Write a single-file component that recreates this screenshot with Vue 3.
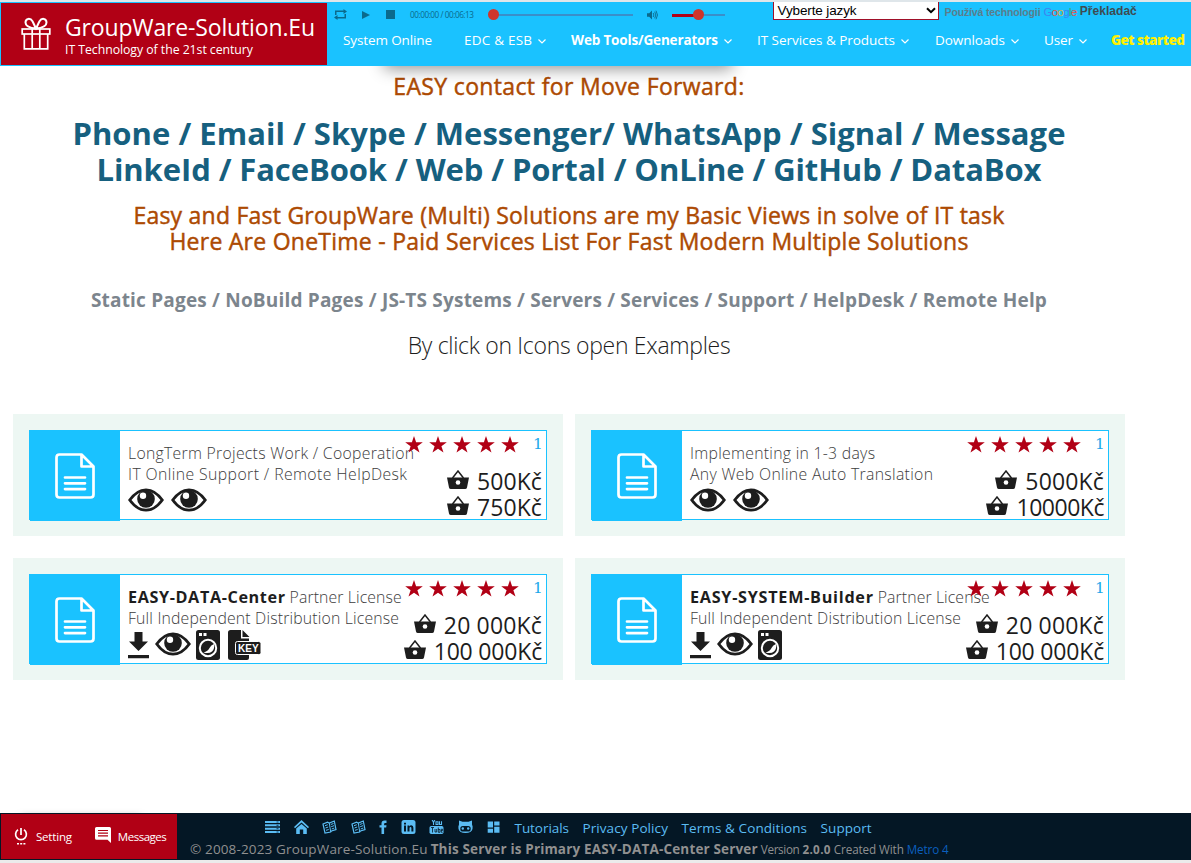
<script setup>
// Spreads or tightens the letters of a label so that it takes the given width.
const vFit = {
  mounted(el, { value }) {
    const gaps = el.textContent.length - 1
    el.style.letterSpacing = (value - el.getBoundingClientRect().width) / gaps + 'px'
  }
}

const nav = [
  { label: 'System Online', fit: 89, col: 'c1' },
  { label: 'EDC & ESB', fit: 68, col: 'c2', menu: true },
  { label: 'Web Tools/Generators', fit: 147, col: 'c3', menu: true },
  { label: 'IT Services & Products', fit: 138, col: 'c4', menu: true },
  { label: 'Downloads', fit: 70, col: 'c5', menu: true },
  { label: 'User', fit: 29, col: 'c6', menu: true },
  { label: 'Get started', fit: 74, col: 'c7' }
]

const cards = [
  {
    lines: [
      [{ text: 'LongTerm Projects Work / Cooperation', fit: 286 }],
      [{ text: 'IT Online Support / Remote HelpDesk', fit: 279 }]
    ],
    icons: ['eye', 'eye'],
    prices: [{ text: '500Kč', fit: 65 }, { text: '750Kč', fit: 65 }]
  },
  {
    lines: [
      [{ text: 'Implementing in 1-3 days', fit: 185 }],
      [{ text: 'Any Web Online Auto Translation', fit: 243 }]
    ],
    icons: ['eye', 'eye'],
    prices: [{ text: '5000Kč', fit: 78.5 }, { text: '10000Kč', fit: 88 }]
  },
  {
    lines: [
      [{ text: 'EASY-DATA-Center', fit: 157, strong: true }, { text: 'Partner License', fit: 112 }],
      [{ text: 'Full Independent Distribution License', fit: 271 }]
    ],
    icons: ['download', 'eye', 'washer', 'key'],
    prices: [{ text: '20 000Kč', fit: 98 }, { text: '100 000Kč', fit: 108.5 }]
  },
  {
    lines: [
      [{ text: 'EASY-SYSTEM-Builder', fit: 183, strong: true }, { text: 'Partner License', fit: 112 }],
      [{ text: 'Full Independent Distribution License', fit: 271 }]
    ],
    icons: ['download', 'eye', 'washer'],
    prices: [{ text: '20 000Kč', fit: 98 }, { text: '100 000Kč', fit: 108.5 }]
  }
]

const links = [
  { label: 'Tutorials', fit: 54.5 },
  { label: 'Privacy Policy', fit: 85.5 },
  { label: 'Terms & Conditions', fit: 125.5 },
  { label: 'Support', fit: 51 }
]
</script>

<template>
  <div class="page">
    <header class="top">
      <div class="brand">
        <svg class="gift" viewBox="0 0 30 33" fill="none" stroke="#fff">
          <rect x="1.2" y="12" width="27.6" height="5" stroke-width="1.7" />
          <path d="M3.3 17V31.8H26.7V17M11.2 12V31.8M18.8 12V31.8" stroke-width="1.7" />
          <path d="M15 11.5C9 11 4.500 9 4.500 5.500C4.500 1 9.500 .8 11.500 4.200C12.800 6.500 13.600 9 15 11.500C16.400 9 17.200 6.500 18.500 4.200C20.500 .8 25.500 1 25.500 5.500C25.500 9 21 11 15 11.500Z" stroke-width="2" />
        </svg>
        <div class="brand-text">
          <span v-fit="250" class="title">GroupWare-Solution.Eu</span>
          <span v-fit="188" class="subtitle">IT Technology of the 21st century</span>
        </div>
      </div>
      <div class="bar">
        <div class="tools">
          <svg class="loop" viewBox="0 0 13 11" fill="#0b6a8c"><path d="M1 6V1.600H9.500V0L13 2.500L9.500 5V3.100H2.500V6ZM12 5V9.400H3.500V11L0 8.500L3.500 6V7.900H10.500V5Z" /></svg>
          <svg class="play" viewBox="0 0 8 8" fill="#0b6a8c"><path d="M0 0L8 4L0 8Z" /></svg>
          <i class="stop"></i>
          <span v-fit="64" class="time">00:00:00 / 00:06:13</span>
          <div class="seek"><i class="knob"></i></div>
          <svg class="speaker" viewBox="0 0 11 10"><path d="M0 3.200H2.200L5 .5V9.500L2.200 6.800H0Z" fill="#0b6a8c" /><path d="M6.200 3Q7.600 5 6.200 7M7.700 1.700Q10 5 7.700 8.300M9 .7Q12 5 9 9.300" fill="none" stroke="#0b6a8c" stroke-width=".9" /></svg>
          <div class="volume"><i class="level"></i><i class="knob"></i></div>
          <div class="language">
            <span v-fit="79">Vyberte jazyk</span>
            <svg viewBox="0 0 10 7" fill="none" stroke="#000" stroke-width="2"><path d="M1 1.200L5 5.200L9 1.200" /></svg>
          </div>
          <span v-fit="96" class="powered">Používá technologii</span>
          <span v-fit="34" class="google"><b class="g1">G</b><b class="g2">o</b><b class="g3">o</b><b class="g1">g</b><b class="g4">l</b><b class="g2">e</b></span>
          <span v-fit="57" class="translator">Překladač</span>
        </div>
        <nav class="nav">
          <a v-for="item in nav" :key="item.label" class="nav-item" :class="item.col">
            <span v-fit="item.fit">{{ item.label }}</span>
            <svg v-if="item.menu" viewBox="0 0 8 5" fill="none" stroke="#fff" stroke-width="1.200"><path d="M.5 .5L4 4L7.500 .5" /></svg>
          </a>
        </nav>
      </div>
    </header>
    <div class="top-shadow"></div>

    <main class="content">
      <div class="orange"><span v-fit="351">EASY contact for Move Forward:</span></div>
      <div class="blue">
        <div><span v-fit="993">Phone / Email / Skype / Messenger/ WhatsApp / Signal / Message</span></div>
        <div><span v-fit="945">LinkeId / FaceBook / Web / Portal / OnLine / GitHub / DataBox</span></div>
      </div>
      <div class="orange second">
        <div><span v-fit="871">Easy and Fast GroupWare (Multi) Solutions are my Basic Views in solve of IT task</span></div>
        <div><span v-fit="799">Here Are OneTime - Paid Services List For Fast Modern Multiple Solutions</span></div>
      </div>
      <div class="gray"><span v-fit="956">Static Pages / NoBuild Pages / JS-TS Systems / Servers / Services / Support / HelpDesk / Remote Help</span></div>
      <div class="hint"><span v-fit="323">By click on Icons open Examples</span></div>

      <section class="cards">
        <div v-for="(card, n) in cards" :key="n" class="cell">
          <article class="card">
            <div class="card-icon">
              <svg viewBox="0 0 40 46" fill="none" stroke="#fff" stroke-width="2.700" stroke-linejoin="round" stroke-linecap="round">
                <path d="M26.500 1.500H4.500Q1.500 1.500 1.500 4.500V41.500Q1.500 44.500 4.500 44.500H35.500Q38.500 44.500 38.500 41.500V13.500ZM26.500 1.500V13.500H38.500M10 24.500H30M10 30.300H30M10 36.100H30" />
              </svg>
            </div>
            <div class="info">
              <div v-for="(line, l) in card.lines" :key="l" class="line">
                <span v-for="part in line" :key="part.text" v-fit="part.fit" :class="{ strong: part.strong }">{{ part.text }}</span>
              </div>
              <div class="icons">
                <template v-for="(icon, i) in card.icons" :key="i">
                  <svg v-if="icon === 'eye'" class="eye" viewBox="0 0 36 24">
                    <path fill-rule="evenodd" fill="#1d1d1d" d="M0 12Q8 .5 18 .5T36 12Q28 23.500 18 23.500T0 12ZM3.500 12Q10 20.800 18 20.800T32.500 12Q26 3.200 18 3.200T3.500 12Z" />
                    <circle cx="18" cy="11" r="8.800" fill="#1d1d1d" /><circle cx="15" cy="7.800" r="3.200" fill="#fff" />
                  </svg>
                  <svg v-else-if="icon === 'download'" class="download" viewBox="0 0 21 28" fill="#1d1d1d"><path d="M6.500 1H14.500V10.500H20L10.500 20L1 10.500H6.500ZM0 24H21V27.200H0Z" /></svg>
                  <svg v-else-if="icon === 'washer'" class="washer" viewBox="0 0 24 30">
                    <rect width="24" height="30" rx="2.500" fill="#1d1d1d" /><rect x="3" y="3" width="3" height="3" fill="#fff" /><rect x="7.500" y="3" width="3" height="3" fill="#fff" />
                    <circle cx="12" cy="18" r="8.200" fill="none" stroke="#fff" stroke-width="2" /><path d="M7.500 22.500Q12 21 13.500 18T18 14Q19 19 16 21.500T7.500 22.500Z" fill="#fff" />
                  </svg>
                  <svg v-else class="key" viewBox="0 0 33 30">
                    <path d="M2.500 0H13V8.500H21V28Q21 30 19 30H2.500Q0 30 0 27.500V2.500Q0 0 2.500 0ZM14.500 0L21.500 7H14.500Z" fill="#1d1d1d" />
                    <rect x="7.500" y="11.500" width="25" height="13" rx="2" fill="#1d1d1d" stroke="#fff" />
                    <rect x="8.300" y="12.300" width="24.200" height="11.600" rx="1.500" fill="#1d1d1d" />
                    <text x="20.300" y="21.800" text-anchor="middle" class="key-text">KEY</text>
                  </svg>
                </template>
              </div>
            </div>
            <div class="side">
              <div class="rating">
                <svg v-for="s in 5" :key="s" viewBox="0 0 18 17" fill="#b10015"><path d="M9 0L11.100 6.300H17.800L12.400 10.200L14.500 16.600L9 12.700L3.500 16.600L5.600 10.200L.2 6.300H6.900Z" /></svg>
                <span class="votes">1</span>
              </div>
              <div v-for="price in card.prices" :key="price.text" class="price">
                <svg viewBox="0 0 22 19"><path d="M0 7.500H22L20 17.500Q19.700 19 18 19H4Q2.300 19 2 17.500Z" fill="#1d1d1d" /><path d="M5.500 8L11 1L16.500 8" fill="none" stroke="#1d1d1d" stroke-width="1.500" /><circle cx="11" cy="12.500" r="2.300" fill="#fff" /></svg>
                <span v-fit="price.fit">{{ price.text }}</span>
              </div>
            </div>
          </article>
        </div>
      </section>
    </main>

    <div class="bottom-shadow"></div>
    <footer class="bottom">
      <div class="actions">
        <svg class="power" viewBox="0 0 14 17" fill="none" stroke="#fff" stroke-width="1.700"><path d="M7 0V7M4 1.800A5.400 5.400 0 1 0 10 1.800" /><path d="M3 15.800H5M6.200 15.800H8.200M9.400 15.800H11.400" stroke-width="1.500" /></svg>
        <span v-fit="36">Setting</span>
        <svg class="message" viewBox="0 0 16 16"><path d="M1.500 0H14.500Q16 0 16 1.500V16L12.500 12.800H1.500Q0 12.800 0 11.300V1.500Q0 0 1.500 0Z" fill="#fff" /><path d="M3 3.500H13M3 6.200H13M3 8.900H13" stroke="#b10015" stroke-width="1.200" /></svg>
        <span v-fit="49">Messages</span>
      </div>
      <div class="foot">
        <div class="foot-links">
          <svg viewBox="0 0 15 14"><path d="M0 2H15M0 5.300H15M0 8.700H15M0 12H15" stroke="#5bbcf3" stroke-width="1.900" /><path d="M11.500 2H13.500M11.500 5.300H13.500M11.500 8.700H13.500M11.500 12H13.500" stroke="#0b3f66" /></svg>
          <svg viewBox="0 0 15 14" fill="#5bbcf3"><path d="M7.500 0L15 7L14 8.200L7.500 2.400L1 8.200L0 7ZM7.500 4L12.800 8.600V14H9.200V9.500H5.800V14H2.200V8.600Z" /></svg>
          <svg v-for="b in 2" :key="b" viewBox="0 0 15 14"><path d="M1 4L5.500 2.200L7.300 3L12.300 1L14 9.700L9.500 11L8.700 12L3 13Z" fill="none" stroke="#5bbcf3" stroke-width="1.200" /><path d="M7.300 3L8.700 12M3 5.700L5.800 4.700M3.500 8L6.200 7M4 10.300L6.700 9.500M8.800 4.500L11.500 3.500M9.200 6.700L12 5.700M9.700 9L12.300 8" stroke="#5bbcf3" /></svg>
          <svg class="narrow" viewBox="3.500 0 8 14" fill="#5bbcf3"><path d="M6 14V7.500H4V5.200H6V3.500Q6 .5 9 .5H11V2.900H9.700Q8.600 2.900 8.600 4V5.200H11L10.700 7.500H8.600V14Z" /></svg>
          <svg viewBox="0 0 15 14"><rect x=".5" width="14" height="14" rx="2.500" fill="#5bbcf3" /><path d="M3 5.500H5V11.500H3ZM3 2.700H5V4.500H3ZM6.500 5.500H8.300V6.400Q9 5.300 10.300 5.300Q12.400 5.300 12.400 7.800V11.500H10.400V8.200Q10.400 7 9.500 7T8.500 8.200V11.500H6.500Z" fill="#041725" /></svg>
          <svg viewBox="0 0 15 14"><path d="M3 -.5L4.500 2.500V5M6 -.5L4.500 2.500M7 1.700H9V4.500H7ZM10.500 1.200V4.500H12.500V1.200" fill="none" stroke="#5bbcf3" stroke-width="1.100" /><rect x=".5" y="6" width="14" height="8" rx="1.700" fill="#5bbcf3" /><path d="M2 7.500H5M3.500 7.500V12.500M6 9V12H7.700V9M9.300 7.500V12.300H11V9.500H9.300M12.200 10.500H13.500V9.200H12.300V12.300H13.600" fill="none" stroke="#041725" stroke-width=".8" /></svg>
          <svg viewBox="0 0 15 14"><path d="M1 .5L4.500 1.700H10.500L14 .5L14 4.500Q15 6 14.500 9Q13.500 13 7.500 13T.5 9Q0 6 1 4.500Z" fill="#5bbcf3" /><rect x="2.300" y="6" width="10.400" height="5.500" rx="2.600" fill="#041725" /><circle cx="4.800" cy="8.500" r="1.200" fill="#5bbcf3" /><circle cx="10.200" cy="8.500" r="1.200" fill="#5bbcf3" /></svg>
          <svg viewBox="0 0 15 14" fill="#5bbcf3"><path d="M1.700 1.500H7V7.500H1.700ZM1.700 8.700H7V12.700H1.700ZM8.200 1.500H13.500V5.500H8.200ZM8.200 6.700H13.500V12.700H8.200Z" /></svg>
          <a v-for="link in links" :key="link.label" v-fit="link.fit">{{ link.label }}</a>
        </div>
        <div class="legal">
          <span v-fit="237.5">© 2008-2023 GroupWare-Solution.Eu</span>
          <b v-fit="327">This Server is Primary EASY-DATA-Center Server</b>
          <span v-fit="39" class="small">Version</span>
          <b v-fit="28" class="small">2.0.0</b>
          <span v-fit="70" class="small">Created With</span>
          <a v-fit="42" class="small">Metro 4</a>
        </div>
      </div>
    </footer>
  </div>
</template>

<style>
body {
  overflow: hidden;
  background: #fff;
}
</style>

<style scoped>
.page {
  position: relative;
  display: flex;
  flex-direction: column;
  box-sizing: border-box;
  width: 1191px;
  height: 863px;
  overflow: hidden;
  border-bottom: 3px solid #ebebeb;
  background: #fff;
  color: #1d1d1d;
  font-family: "Open Sans", "Noto Sans", sans-serif;
}
span, a, b { white-space: nowrap; }
[class] > span, .nav-item span, .foot a, .legal b { display: inline-block; }
svg, i { flex: none; display: block; }

.top {
  position: relative;
  z-index: 2;
  display: flex;
  box-sizing: border-box;
  height: 66px;
  border-top: 2px solid #dfe6ea;
  background: #1ac2ff;
}
.brand {
  display: flex;
  flex: none;
  width: 326px;
  height: 62px;
  margin: 1px 0 0 1px;
  background: #b10015;
  color: #fff;
}
.gift { width: 30px; height: 33px; margin: 14px 14px 0 20px; }
.brand-text { display: flex; flex-direction: column; align-items: flex-start; }
.title { height: 31px; margin-top: 9px; font-size: 23px; line-height: 31px; }
.subtitle { height: 16px; font-size: 12.300px; line-height: 16px; margin-top: -1px; }

.bar { flex: 1; }
.tools { display: flex; align-items: center; height: 25px; padding-left: 7px; }
.loop { width: 13px; height: 11px; }
.play { width: 8px; height: 8px; margin-left: 15px; }
.stop { width: 9px; height: 9px; margin-left: 16px; background: #0b6a8c; }
.time { margin: -1px 0 0 15px; color: #0b6a8c; font-size: 8.200px; }
.seek { position: relative; width: 140px; height: 2px; margin-left: 19px; background: #3a8fca; }
.knob { position: absolute; top: -5px; left: -5px; width: 11px; height: 11px; border-radius: 50%; background: #ce352c; }
.speaker { width: 11px; height: 10px; margin-left: 14px; }
.volume { position: relative; width: 53px; height: 2px; margin-left: 14px; background: #3a8fca; }
.level { width: 27px; height: 3px; background: #b10015; }
.volume .knob { left: 21px; }
.language {
  display: flex;
  align-items: center;
  box-sizing: border-box;
  width: 166px;
  height: 18px;
  margin: 0 6px 7px 48px;
  padding: 0 2px 0 4px;
  justify-content: space-between;
  border: 1px solid #a01029;
  border-top: 0;
  background: #fff;
  color: #000;
  font: 13.500px "Liberation Sans", Arial, sans-serif;
}
.language svg { width: 10px; height: 7px; }
.powered, .google, .translator { padding-bottom: 6px; font: bold 10.500px "Liberation Sans", Arial, sans-serif; color: #5a7d8c; }
.google { margin: 0 3px; font-size: 11.500px; font-weight: normal; }
.google b { font-weight: normal; }
.g1 { color: #3f83f0; }
.g2 { color: #e2554a; }
.g3 { color: #d4b23c; }
.g4 { color: #3ba662; }
.translator { padding-bottom: 7px; color: #3d4b52; font-size: 12px; }
.nav { display: flex; height: 26px; padding-left: 16px; color: #fff; font-size: 13.500px; }
.nav-item { display: flex; align-items: center; flex: none; gap: 6px; }
.nav-item svg { width: 8px; height: 5px; margin-top: 2px; }
.c1 { width: 121px; }
.c2 { width: 107px; }
.c3 { width: 186px; font-weight: 700; }
.c4 { width: 178px; }
.c5 { width: 109px; }
.c6 { width: 67px; }
.c7 { color: #fff000; font-weight: 800; }

.top-shadow {
  position: absolute;
  z-index: 1;
  top: 40px;
  left: 384px;
  width: 348px;
  height: 26px;
  box-shadow: 0 3px 16px rgba(0, 0, 0, .42);
}

.content { display: flex; flex: none; flex-direction: column; width: 1138px; height: 747px; text-align: center; }
.orange { margin-top: 7px; color: #ad4a02; font-size: 23px; line-height: 26px; -webkit-text-stroke: .45px #ad4a02; }
.blue { margin-top: 16px; color: #16607f; font-size: 31px; font-weight: 700; line-height: 36px; }
.second { margin-top: 15px; }
.gray { margin-top: 34px; color: #7c858d; font-size: 19px; font-weight: 700; line-height: 24px; }
.hint { margin-top: 18px; font-size: 23px; font-weight: 300; line-height: 30px; }

.cards {
  display: grid;
  grid-template-columns: 550px 550px;
  gap: 22px 12px;
  margin: 54px 0 0 13px;
  text-align: left;
}
.cell { box-sizing: border-box; height: 122px; padding: 16px; background: #edf7f3; }
.card { position: relative; display: flex; box-sizing: border-box; width: 518px; height: 90px; border: 1px solid #1ac2ff; background: #fff; }
.card-icon { display: flex; align-items: center; justify-content: center; width: 90px; height: 90px; flex: none; background: #1ac2ff; }
.card-icon svg { width: 40px; height: 46px; }
.info { margin: 12px 0 0 8px; }
.line { display: flex; gap: 4px; height: 21px; color: #3c3c3c; font-size: 15.800px; font-weight: 300; line-height: 21px; }
.strong { color: #1d1d1d; font-size: 16.200px; font-weight: 700; }
.icons { display: flex; align-items: center; gap: 7px; height: 30px; margin-top: 1px; }
.eye { width: 36px; height: 24px; margin-bottom: 2px; }
.download { width: 21px; height: 28px; margin-right: -1px; }
.washer { width: 24px; height: 30px; margin-left: -2px; }
.key { width: 33px; height: 30px; margin-left: 1px; }
.key-text { fill: #fff; font: bold 10px "Liberation Sans", sans-serif; }
.side { position: absolute; top: 0; right: 4px; display: flex; flex-direction: column; align-items: flex-end; }
.rating { display: flex; gap: 6px; height: 37px; }
.rating svg { width: 18px; height: 17px; margin-top: 5px; }
.votes { width: 9px; margin: 3px 0 0 8px; color: #1ba8ea; font: 15.500px/20px "DejaVu Serif", serif; }
.price { display: flex; gap: 8px; height: 26px; font-size: 23px; line-height: 26px; }
.price svg { width: 22px; height: 19px; margin-top: 2px; }

.bottom-shadow { position: absolute; top: 818px; left: 22px; width: 118px; height: 20px; box-shadow: 0 0 8px rgba(0, 0, 0, .6); }
.bottom { position: relative; display: flex; height: 47px; background: #041725; }
.actions { display: flex; align-items: center; flex: none; width: 176px; height: 45px; margin: 1px 0 0 1px; background: #b10015; color: #fff; font-size: 11.500px; }
.power { width: 14px; height: 17px; margin: 0 8px 0 13px; }
.message { width: 16px; height: 16px; margin: 0 7px 3px 23px; }
.foot { padding-left: 13px; }
.foot-links { display: flex; align-items: center; gap: 13.500px; height: 28px; padding-left: 75px; color: #5bbcf3; font-size: 13.500px; }
.foot-links svg { width: 15px; height: 14px; }
.foot-links .narrow { width: 8px; }
.foot-links a { margin-top: 1px; }
.legal { display: flex; align-items: baseline; gap: 3px; height: 20px; margin-top: -2px; color: #909090; font-size: 13.500px; line-height: 20px; }
.legal .small { font-size: 11.700px; }
.legal a { color: #0b5fbe; }
</style>
